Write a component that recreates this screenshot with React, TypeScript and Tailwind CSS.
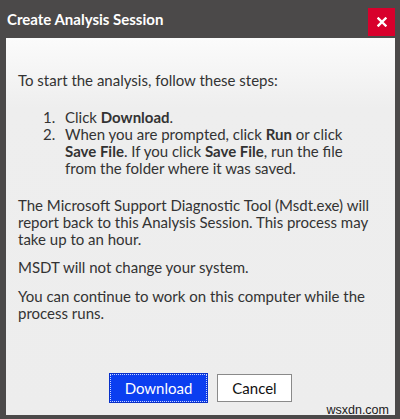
import React from 'react';

const steps = [
  <>Click <b>Download</b>.</>,
  <>When you are prompted, click <b>Run</b> or click <b>Save File</b>. If you click <b>Save File</b>, run the file from the folder where it was saved.</>,
];

export default function App() {
  return (
    <div
      className="w-[400px] h-[419px] bg-[#4b4949] flex flex-col pl-[6px] pr-[5px] pb-[4px] text-[#333333]"
      style={{ fontFamily: 'Lato, "Noto Sans", sans-serif' }}
    >
      {/* title bar */}
      <div className="h-[38px] flex items-center justify-between shrink-0">
        <span className="pl-[1px] text-white font-bold text-[15px] leading-none">Create Analysis Session</span>
        <button className="w-[27px] h-[28px] mt-[6px] bg-[#d8002c] flex items-center justify-center">
          <svg width="10" height="10" viewBox="0 0 10 10">
            <path d="M1.5 1.5 L8.5 8.5 M8.5 1.5 L1.5 8.5" stroke="white" strokeWidth="2.4" strokeLinecap="square" />
          </svg>
        </button>
      </div>

      {/* body */}
      <div className="relative flex-1 flex flex-col bg-[linear-gradient(to_bottom,#fbfbfb_0px,#eeeeee_70px,#ededed_100%)] pl-[12px] pr-[21px] pt-[34px] text-[15px] leading-[17px]">
        <p>To start the analysis, follow these steps:</p>

        <ol className="mt-[20px] ml-[25px] flex flex-col">
          {steps.map((s, i) => (
            <li key={i} className="flex">
              <span className="w-[22px] shrink-0">{i + 1}.</span>
              <span>{s}</span>
            </li>
          ))}
        </ol>

        <p className="mt-[20px]">
          The Microsoft Support Diagnostic Tool (Msdt.exe) will report back to this Analysis Session. This process may take up to an hour.
        </p>
        <p className="mt-[11px]">MSDT will not change your system.</p>
        <p className="mt-[12px]">You can continue to work on this computer while the process runs.</p>

        <div className="mt-auto mb-[12px] flex justify-center items-center gap-[9px] pl-[9px]">
          <button className="w-[99px] h-[30px] bg-[#0b3ef0] text-white outline-1 outline-dotted outline-offset-[-2px] outline-[#c9d4ff] border border-[#0830c8]">
            Download
          </button>
          <button className="w-[75px] h-[28px] bg-white border border-[#8a8a8a] text-[#111111]">Cancel</button>
        </div>

        <span
          className="absolute right-[6px] bottom-[-1px] text-[12.5px] leading-none text-[#1a1a1a]"
          style={{ fontFamily: '"Liberation Sans", Arial, sans-serif' }}
        >
          wsxdn.com
        </span>
      </div>
    </div>
  );
}
